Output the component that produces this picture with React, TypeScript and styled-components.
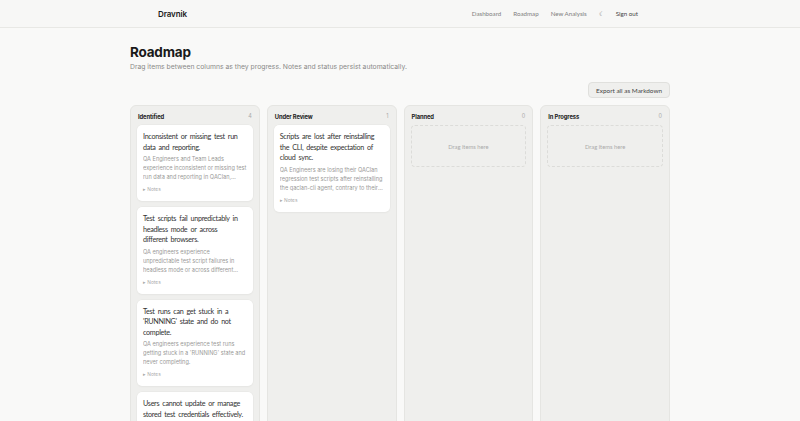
import React from "react";
import styled, { createGlobalStyle } from "styled-components";

const GlobalStyle = createGlobalStyle`
  html, body {
    margin: 0;
    padding: 0;
    background: #f9f9f8;
    font-family: Inter, "Liberation Sans", sans-serif;
    color: #222;
  }
  ::-webkit-scrollbar { width: 3px; }
  ::-webkit-scrollbar-track { background: #f9f9f8; }
  ::-webkit-scrollbar-thumb { background: #d8d8d6; border-radius: 2px; }
`;

const Header = styled.header`
  height: 27px;
  background: #f7f7f6;
  border-bottom: 1px solid #e8e8e5;
  display: flex;
  justify-content: center;
`;

const HeaderInner = styled.div`
  width: 480px;
  padding-right: 4px;
  display: flex;
  align-items: center;
  justify-content: space-between;
`;

const Logo = styled.div`
  font-size: 8px;
  font-weight: 600;
  letter-spacing: -0.1px;
  color: #1a1a1a;
`;

const Nav = styled.nav`
  display: flex;
  align-items: center;
  gap: 12px;
  font-family: Lato, "Liberation Sans", sans-serif;
`;

const NavLink = styled.a<{ $strong?: boolean }>`
  font-size: 6.2px;
  color: ${(p) => (p.$strong ? "#444" : "#808080")};
  text-decoration: none;
`;

const Main = styled.main`
  width: 540px;
  margin: 0 auto;
  padding-top: 16px;
`;

const Title = styled.h1`
  margin: 0;
  font-size: 13.5px;
  font-weight: 700;
  letter-spacing: -0.2px;
  line-height: 16px;
  color: #1a1a1a;
`;

const Subtitle = styled.p`
  margin: 2px 0 0;
  font-size: 6.8px;
  color: #8a8a88;
`;

const Toolbar = styled.div`
  display: flex;
  justify-content: flex-end;
  margin-top: 11px;
`;

const Button = styled.button`
  height: 16px;
  padding: 0 7px;
  font-family: Lato, "Liberation Sans", sans-serif;
  font-size: 6.4px;
  color: #444;
  background: #efefed;
  border: 1px solid #e0e0dd;
  border-radius: 4px;
`;

const Board = styled.div`
  margin-top: 7px;
  display: grid;
  grid-template-columns: repeat(4, 1fr);
  gap: 7px;
`;

const Column = styled.section`
  background: #efefed;
  border: 1px solid #e5e5e2;
  border-radius: 6px;
  padding: 0 6px 8px;
  min-height: 330px;
  display: flex;
  flex-direction: column;
`;

const ColumnHead = styled.div`
  height: 18px;
  padding: 1px 1px 0;
  display: flex;
  align-items: center;
  justify-content: space-between;
`;

const ColumnName = styled.span`
  font-size: 5.8px;
  font-weight: 700;
  letter-spacing: -0.1px;
  color: #222;
`;

const Count = styled.span`
  font-size: 5.5px;
  color: #aaa;
`;

const Cards = styled.div`
  display: flex;
  flex-direction: column;
  gap: 6px;
`;

const Card = styled.article`
  background: #ffffff;
  border-radius: 5px;
  box-shadow: 0 0 0 0.5px #e6e6e3, 0 1px 2px rgba(0, 0, 0, 0.04);
  padding: 7px 4px 8px 6px;
`;

const CardTitle = styled.h3`
  margin: 0;
  padding-right: 4.4px;
  font-family: Lato, "Liberation Sans", sans-serif;
  font-size: 7.2px;
  font-weight: 400;
  letter-spacing: -0.3px;
  word-spacing: 1.5px;
  line-height: 10.5px;
  color: #333;
`;

const CardText = styled.p`
  margin: 2px 1.5px 0 0;
  font-size: 5.6px;
  line-height: 9px;
  color: #9a9a98;
  display: -webkit-box;
  -webkit-line-clamp: 3;
  -webkit-box-orient: vertical;
  overflow: hidden;
`;

const Notes = styled.div`
  margin-top: 4px;
  font-size: 4.8px;
  line-height: 7px;
  color: #aaa;
`;

const DropZone = styled.div`
  height: 40px;
  border: 1px dashed #dcdcd9;
  border-radius: 4px;
  display: flex;
  align-items: center;
  justify-content: center;
  font-family: Lato, "Liberation Sans", sans-serif;
  font-size: 5.8px;
  color: #aaa;
`;

type Item = { title: string; text: string };
type Col = { name: string; items: Item[] };

const columns: Col[] = [
  {
    name: "Identified",
    items: [
      {
        title: "Inconsistent or missing test run data and reporting.",
        text: "QA Engineers and Team Leads experience inconsistent or missing test run data and reporting in QAClan, making it difficult to track progress.",
      },
      {
        title: "Test scripts fail unpredictably in headless mode or across different browsers.",
        text: "QA engineers experience unpredictable test script failures in headless mode or across different browsers and environments.",
      },
      {
        title: "Test runs can get stuck in a 'RUNNING' state and do not complete.",
        text: "QA engineers experience test runs getting stuck in a 'RUNNING' state and never completing.",
      },
      {
        title: "Users cannot update or manage stored test credentials effectively.",
        text: "QA Engineers are unable to update or manage the credentials stored for their test environments.",
      },
    ],
  },
  {
    name: "Under Review",
    items: [
      {
        title: "Scripts are lost after reinstalling the CLI, despite expectation of cloud sync.",
        text: "QA Engineers are losing their QAClan regression test scripts after reinstalling the qaclan-cli agent, contrary to their expectations of cloud sync.",
      },
    ],
  },
  { name: "Planned", items: [] },
  { name: "In Progress", items: [] },
];

export default function App() {
  return (
    <>
      <GlobalStyle />
      <Header>
        <HeaderInner>
          <Logo>Dravnik</Logo>
          <Nav>
            <NavLink>Dashboard</NavLink>
            <NavLink>Roadmap</NavLink>
            <NavLink>New Analysis</NavLink>
            <NavLink>☾</NavLink>
            <NavLink $strong>Sign out</NavLink>
          </Nav>
        </HeaderInner>
      </Header>
      <Main>
        <Title>Roadmap</Title>
        <Subtitle>Drag items between columns as they progress. Notes and status persist automatically.</Subtitle>
        <Toolbar>
          <Button>Export all as Markdown</Button>
        </Toolbar>
        <Board>
          {columns.map((col) => (
            <Column key={col.name}>
              <ColumnHead>
                <ColumnName>{col.name}</ColumnName>
                <Count>{col.items.length}</Count>
              </ColumnHead>
              {col.items.length === 0 ? (
                <DropZone>Drag items here</DropZone>
              ) : (
                <Cards>
                  {col.items.map((it) => (
                    <Card key={it.title}>
                      <CardTitle>{it.title}</CardTitle>
                      <CardText>{it.text}</CardText>
                      <Notes>▸ Notes</Notes>
                    </Card>
                  ))}
                </Cards>
              )}
            </Column>
          ))}
        </Board>
      </Main>
    </>
  );
}
